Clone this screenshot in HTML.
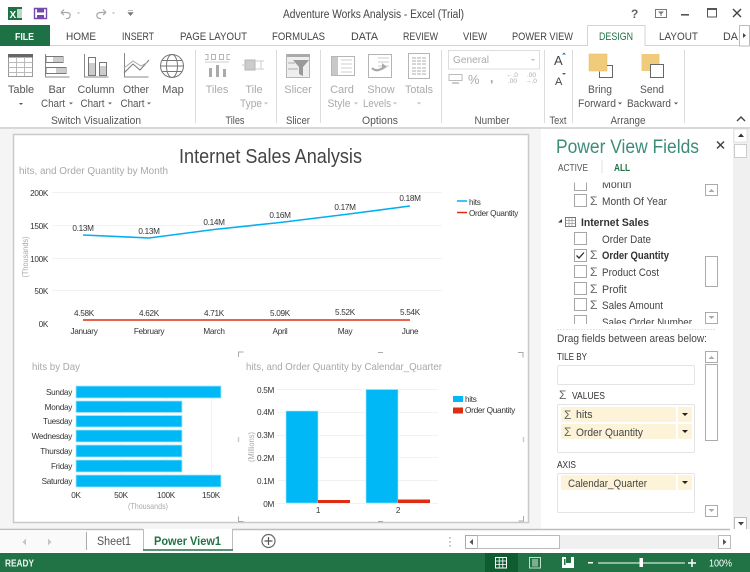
<!DOCTYPE html>
<html><head><meta charset="utf-8"><style>
html,body{margin:0;padding:0;background:#fff;width:750px;height:572px;overflow:hidden}
svg{display:block;filter:blur(.25px)}
text{font-family:"Liberation Sans",sans-serif;font-size:11px;fill:#444}
.r text{font-size:11px;fill:#555;text-anchor:middle}
.d text{font-size:11px;fill:#aaa;text-anchor:middle}
.tab text{font-size:11px;fill:#444}
.c text{font-size:8.2px;fill:#333;letter-spacing:-.3px}
.m{text-anchor:middle}
.e{text-anchor:end}
.f text{font-size:10.600px;fill:#444}
.f text.s{font-size:12px;fill:#666}
.f text.h{font-size:10.200px;fill:#333}
.g{fill:none;stroke:#f2f2f2;stroke-width:1}
.i{fill:none;stroke:#777;stroke-width:1}
.id{fill:none;stroke:#b5b5b5;stroke-width:1}
.sb{fill:#fff;stroke:#ababab}
.cb{fill:#fff;stroke:#a6a6a6}
</style></head><body>
<svg width="750" height="572" viewBox="0 0 750 572" xmlns="http://www.w3.org/2000/svg">
<defs><clipPath id="fl"><rect x="550" y="182.500" width="150" height="141.500"/></clipPath></defs>
<rect width="750" height="572" fill="#fff"/>

<!-- title bar -->
<rect x="8" y="7" width="14" height="13" fill="#1e7145"/><rect x="17" y="9" width="5" height="9" fill="#bcd8c6"/>
<text x="9.500" y="18" style="font-size:10px;font-weight:bold;fill:#fff">X</text>
<path d="M34.500 8.500H46.500V18.500H34.500Z" fill="#fff" stroke="#7449ae" stroke-width="1.400"/><rect x="37" y="9" width="7" height="3.500" fill="#7449ae"/><rect x="37" y="15" width="7" height="3.500" fill="#7449ae"/>
<path d="M61 12.500L64 9.500M61 12.500L64 15M61 12.500H67Q71 13 70 16.500Q69 19 66 18.500" fill="none" stroke="#a8a8a8" stroke-width="1.200"/>
<path d="M77 12.500h3l-1.500 1.500z" fill="#aaa"/>
<path d="M106 12.500L103 9.500M106 12.500L103 15M106 12.500H100Q96 13 97 16.500Q98 19 101 18.500" fill="none" stroke="#a8a8a8" stroke-width="1.200"/>
<path d="M112 12.500h3l-1.500 1.500z" fill="#aaa"/>
<path d="M128 10.500h5M128 12.500h5l-2.500 3z" fill="#777" stroke="#777" stroke-width=".6"/>
<text x="283" y="18" textLength="181" lengthAdjust="spacingAndGlyphs" style="font-size:11.500px;fill:#444">Adventure Works Analysis - Excel (Trial)</text>
<text x="631" y="18" style="font-size:12px;font-weight:bold;fill:#666">?</text>
<rect x="655.500" y="9.500" width="11" height="8" fill="none" stroke="#777"/><path d="M658 11.500h6l-3 3z" fill="#777"/><path d="M661 13v3" stroke="#777"/>
<rect x="681" y="14" width="8" height="1.600" fill="#555"/>
<rect x="707.500" y="8.500" width="9" height="8.500" fill="none" stroke="#555"/><rect x="707" y="8" width="10" height="2" fill="#555"/>
<path d="M733 9l8 8M741 9l-8 8" stroke="#444" stroke-width="1.400"/>

<!-- tabs -->
<rect x="0" y="25" width="50" height="21" fill="#1e7145"/>
<text x="15" y="40" textLength="19" lengthAdjust="spacingAndGlyphs" style="font-size:10.500px;font-weight:bold;fill:#fff">FILE</text>
<g class="tab">
<text x="66" y="40" textLength="30" lengthAdjust="spacingAndGlyphs">HOME</text>
<text x="122" y="40" textLength="32" lengthAdjust="spacingAndGlyphs">INSERT</text>
<text x="180" y="40" textLength="67" lengthAdjust="spacingAndGlyphs">PAGE LAYOUT</text>
<text x="272" y="40" textLength="53" lengthAdjust="spacingAndGlyphs">FORMULAS</text>
<text x="351" y="40" textLength="27" lengthAdjust="spacingAndGlyphs">DATA</text>
<text x="403" y="40" textLength="35" lengthAdjust="spacingAndGlyphs">REVIEW</text>
<text x="463" y="40" textLength="24" lengthAdjust="spacingAndGlyphs">VIEW</text>
<text x="512" y="40" textLength="61" lengthAdjust="spacingAndGlyphs">POWER VIEW</text>
<text x="659" y="40" textLength="39" lengthAdjust="spacingAndGlyphs">LAYOUT</text>
<text x="723" y="40" textLength="15" lengthAdjust="spacingAndGlyphs">DA</text>
</g>
<path d="M50 45.500H587.500V25.500H645V45.500H739" fill="none" stroke="#d4d4d4"/>
<text x="599" y="40" textLength="34" lengthAdjust="spacingAndGlyphs" style="font-size:11px;fill:#217346">DESIGN</text>
<rect x="739.500" y="25.500" width="10" height="20.500" fill="#fff" stroke="#bbb"/><path d="M743 33l3 2.500-3 2.500z" fill="#444"/>

<!-- ribbon icons enabled -->
<g class="i">
<rect x="8.500" y="54.500" width="24" height="22" stroke="#999"/><rect x="8" y="54" width="25" height="3.500" fill="#666" stroke="none"/>
<path d="M8.500 62.500h24M8.500 67.500h24M8.500 72.500h24M16.500 58v18M24.500 58v18" stroke="#bbb"/>
<path d="M45.500 54v23h24" stroke="#888"/>
<rect x="46" y="56.500" width="17" height="6" fill="#fff"/><rect x="53" y="57" width="10" height="5" fill="#ccc" stroke="none"/>
<rect x="46" y="67.500" width="20" height="6"/><rect x="56" y="68" width="10" height="5" fill="#ccc" stroke="none"/>
<path d="M84.500 54v23h24" stroke="#888"/>
<rect x="88.500" y="57.500" width="7" height="18"/><rect x="89" y="63" width="6" height="12" fill="#ccc" stroke="none"/>
<rect x="99.500" y="62.500" width="7" height="13"/><rect x="100" y="66" width="6" height="9" fill="#ccc" stroke="none"/>
<path d="M124.500 53v24h24" stroke="#888"/>
<path d="M124 73l9-9 7 6 9-10" stroke="#777"/><path d="M124 68l9-7 8 5 7-4" stroke="#aaa"/>
<circle cx="172" cy="66" r="11.500"/><ellipse cx="172" cy="66" rx="5.500" ry="11.500"/><path d="M160.500 66h23M162 60.500h20M162 71.500h20"/>
</g>

<g class="r">
<text x="21" y="93">Table</text><path d="M19 103h4l-2 2z" fill="#555"/>
<text x="57" y="93">Bar</text><text x="53" y="107" textLength="24" lengthAdjust="spacingAndGlyphs">Chart</text><path d="M69 102.500h4l-2 2z" fill="#666"/>
<text x="96" y="93" textLength="37" lengthAdjust="spacingAndGlyphs">Column</text><text x="92.500" y="107" textLength="24" lengthAdjust="spacingAndGlyphs">Chart</text><path d="M108 102.500h4l-2 2z" fill="#666"/>
<text x="136" y="93" textLength="26" lengthAdjust="spacingAndGlyphs">Other</text><text x="132.500" y="107" textLength="24" lengthAdjust="spacingAndGlyphs">Chart</text><path d="M147 102.500h4l-2 2z" fill="#666"/>
<text x="173" y="93">Map</text>
<text x="600" y="93" textLength="24" lengthAdjust="spacingAndGlyphs">Bring</text><text x="597" y="107" textLength="38" lengthAdjust="spacingAndGlyphs">Forward</text><path d="M618 102.500h4l-2 2z" fill="#555"/>
<text x="652" y="93" textLength="24" lengthAdjust="spacingAndGlyphs">Send</text><text x="649" y="107" textLength="44" lengthAdjust="spacingAndGlyphs">Backward</text><path d="M674 102.500h4l-2 2z" fill="#555"/>
<text x="96" y="124" textLength="90" lengthAdjust="spacingAndGlyphs">Switch Visualization</text>
<text x="235" y="124" textLength="19" lengthAdjust="spacingAndGlyphs">Tiles</text>
<text x="298" y="124" textLength="24" lengthAdjust="spacingAndGlyphs">Slicer</text>
<text x="380" y="124" textLength="36" lengthAdjust="spacingAndGlyphs">Options</text>
<text x="492" y="124" textLength="35" lengthAdjust="spacingAndGlyphs">Number</text>
<text x="558" y="124" textLength="17" lengthAdjust="spacingAndGlyphs">Text</text>
<text x="628" y="124" textLength="35" lengthAdjust="spacingAndGlyphs">Arrange</text>
</g>
<g class="d">
<text x="217" y="93">Tiles</text>
<text x="254" y="93">Tile</text><text x="251" y="107" textLength="22" lengthAdjust="spacingAndGlyphs">Type</text><path d="M264 102.500h4l-2 2z" fill="#bbb"/>
<text x="298" y="93">Slicer</text>
<text x="342" y="93">Card</text><text x="339" y="107" textLength="23" lengthAdjust="spacingAndGlyphs">Style</text><path d="M354 102.500h4l-2 2z" fill="#bbb"/>
<text x="381" y="93">Show</text><text x="377" y="107" textLength="28" lengthAdjust="spacingAndGlyphs">Levels</text><path d="M393 102.500h4l-2 2z" fill="#bbb"/>
<text x="419" y="93" textLength="28" lengthAdjust="spacingAndGlyphs">Totals</text><path d="M417 102.500h4l-2 2z" fill="#bbb"/>
</g>

<!-- disabled icons -->
<g class="id">
<path d="M205 54.500h3v5h-3M211.500 54.500h4v5h-4zM219.500 54.500h4v5h-4zM230 54.500h-3v5h3"/>
<path d="M205 62h24" stroke="#ccc"/>
<rect x="209" y="68" width="3" height="9" fill="#aaa" stroke="none"/><rect x="216" y="65" width="3" height="12" fill="#aaa" stroke="none"/><rect x="223" y="69" width="3" height="8" fill="#aaa" stroke="none"/>
<rect x="245" y="60" width="10" height="10" fill="#ccc"/><path d="M242 65h3M255 61h9M255 69h9M261 61v8" stroke="#ccc"/>
<rect x="286.500" y="54.500" width="23" height="23" fill="#eee"/><rect x="287" y="54" width="23" height="3" fill="#aaa" stroke="none"/>
<path d="M293 60h16l-6 7v9l-4-2v-7z" fill="#999" stroke="none"/><path d="M288 63h7M288 69h10" stroke="#ccc" stroke-width="2"/>
<rect x="331.500" y="56.500" width="23" height="19"/><rect x="332" y="57" width="6" height="18" fill="#c8c8c8" stroke="none"/><path d="M341 60h11M341 64h11M341 68h11M341 72h11" stroke="#ccc"/>
<rect x="368.500" y="54.500" width="23" height="23"/><path d="M378 58h11M378 62h11M378 66h11" stroke="#ccc"/><path d="M372 68q5 5 12-1" stroke="#aaa" stroke-width="2.200"/><path d="M382 63l5 4-5 3z" fill="#aaa" stroke="none"/>
<rect x="408.500" y="53.500" width="21" height="25"/><path d="M412 58h14M412 61h14M412 64h14M412 68h14M412 71h14M412 74h14" stroke="#c8c8c8" stroke-width="1.500"/><path d="M416.500 57v18M421.500 57v18" stroke="#fff"/>
<rect x="448.500" y="50.500" width="91" height="18.500" stroke="#ddd"/>
<path d="M449 74.500h13v6h-13z" stroke="#bbb"/><path d="M452 83h7" stroke="#ccc" stroke-width="2"/>
</g>
<text x="453" y="63" textLength="36" lengthAdjust="spacingAndGlyphs" style="fill:#aaa;font-size:10.500px">General</text>
<path d="M531 59h4l-2 2z" fill="#bbb"/>
<text x="468" y="84" style="font-size:13px;fill:#aaa">%</text>
<text x="490" y="82" style="font-size:12px;font-weight:bold;fill:#999">,</text>
<text x="506" y="77" style="font-size:6.500px;fill:#aaa">←.0</text><text x="508" y="83" style="font-size:6.500px;fill:#aaa">.00</text>
<text x="527" y="77" style="font-size:6.500px;fill:#aaa">.00</text><text x="525" y="83" style="font-size:6.500px;fill:#aaa">→.0</text>
<text x="554" y="65" style="font-size:13px;fill:#444">A</text><path d="M562 54.500h4l-2-2z" fill="#1a6fb5"/>
<text x="555" y="85" style="font-size:11px;fill:#444">A</text><path d="M562 73h4l-2 2z" fill="#1a6fb5"/>

<rect x="589" y="54" width="18" height="17" fill="#f1cb7c" stroke="#e6b95e" stroke-width=".5"/>
<path d="M607 65.500h5.500v12h-13v-6" fill="none" stroke="#666"/>
<rect x="641.500" y="54" width="18" height="17" fill="#f1cb7c"/>
<rect x="650.500" y="64.500" width="13" height="13" fill="#fff" stroke="#666"/>

<g stroke="#dcdcdc"><path d="M195.500 50v73M276.500 50v73M320.500 50v73M441.500 50v73M544.500 50v73M572.500 50v73M684.500 50v73"/></g>
<path d="M737 121l4-4 4 4" fill="none" stroke="#444" stroke-width="1.400"/>

<!-- workspace -->
<rect x="0" y="127" width="750" height="403" fill="#f5f5f5"/>
<rect x="0" y="127" width="750" height="2" fill="#d8d8d8"/>
<rect x="13.500" y="134.500" width="515" height="388" fill="#fff" stroke="#c9c9c9" stroke-width="1.500"/>

<text x="179" y="163" textLength="183" lengthAdjust="spacingAndGlyphs" style="font-size:20px;fill:#444">Internet Sales Analysis</text>
<text x="19" y="174" textLength="149" lengthAdjust="spacingAndGlyphs" style="font-size:10.500px;fill:#a8a8a8">hits, and Order Quantity by Month</text>

<!-- line chart -->
<path class="g" d="M52 192.500H442M52 225.500H442M52 258.500H442M52 290.500H442"/>
<polyline points="83,235 149,238 214,229.500 280,222.500 345,214.500 410,206" fill="none" stroke="#00b0f0" stroke-width="1.600"/>
<path d="M83 320H410" stroke="#dd2e12" stroke-width="1.600"/>
<g class="c">
<text class="e" x="48" y="196">200K</text><text class="e" x="48" y="229">150K</text><text class="e" x="48" y="262">100K</text><text class="e" x="48" y="294">50K</text><text class="e" x="48" y="327">0K</text>
<text class="m" x="83" y="231">0.13M</text><text class="m" x="149" y="234">0.13M</text><text class="m" x="214" y="225">0.14M</text><text class="m" x="280" y="218">0.16M</text><text class="m" x="345" y="210">0.17M</text><text class="m" x="410" y="201">0.18M</text>
<text class="m" x="84" y="316">4.58K</text><text class="m" x="149" y="316">4.62K</text><text class="m" x="214" y="316">4.71K</text><text class="m" x="280" y="316">5.09K</text><text class="m" x="345" y="315">5.52K</text><text class="m" x="410" y="315">5.54K</text>
<text class="m" x="84" y="334">January</text><text class="m" x="149" y="334">February</text><text class="m" x="214" y="334">March</text><text class="m" x="280" y="334">April</text><text class="m" x="345" y="334">May</text><text class="m" x="410" y="334">June</text>
<text x="469" y="205">hits</text><text x="469" y="216" textLength="49" lengthAdjust="spacingAndGlyphs">Order Quantity</text>
</g>
<path d="M457 201h10" stroke="#00b0f0" stroke-width="1.500"/><path d="M457 212.500h10" stroke="#dd2e12" stroke-width="1.500"/>
<text transform="translate(28,257) rotate(-90)" text-anchor="middle" textLength="41" lengthAdjust="spacingAndGlyphs" style="font-size:8.500px;fill:#aaa">(Thousands)</text>

<!-- bar chart -->
<text x="32" y="370" textLength="48" lengthAdjust="spacingAndGlyphs" style="font-size:10.500px;fill:#a8a8a8">hits by Day</text>
<path class="g" d="M121.500 386V488M166.500 386V488M211.500 386V488"/>
<g fill="#00b8f5" stroke="#a8e6fb" stroke-width=".8">
<rect x="76" y="386" width="145" height="12"/><rect x="76" y="401" width="106" height="11.500"/><rect x="76" y="415.500" width="106" height="11.500"/><rect x="76" y="430" width="106" height="12"/><rect x="76" y="445" width="106" height="12"/><rect x="76" y="460" width="106" height="12"/><rect x="76" y="475" width="145" height="12"/>
</g>
<g class="c">
<text class="e" x="72" y="395">Sunday</text><text class="e" x="72" y="410">Monday</text><text class="e" x="72" y="424">Tuesday</text><text class="e" x="72" y="439">Wednesday</text><text class="e" x="72" y="454">Thursday</text><text class="e" x="72" y="469">Friday</text><text class="e" x="72" y="484">Saturday</text>
<text class="m" x="76" y="498">0K</text><text class="m" x="121" y="498">50K</text><text class="m" x="166" y="498">100K</text><text class="m" x="211" y="498">150K</text>
</g>
<text x="148" y="509" text-anchor="middle" textLength="40" lengthAdjust="spacingAndGlyphs" style="font-size:8.500px;fill:#aaa">(Thousands)</text>

<!-- column chart -->
<path d="M238.500 357v-5h5M518 352.500h5v5M523.500 516v5h-5M243.500 521.500h-5v-5M378 352.500h5M378 521.500h5" fill="none" stroke="#aaa"/>
<path d="M238.500 437v5M523.500 437v5" stroke="#ccc" stroke-width="1.500"/>
<text x="246" y="370" textLength="196" lengthAdjust="spacingAndGlyphs" style="font-size:10.500px;fill:#a8a8a8">hits, and Order Quantity by Calendar_Quarter</text>
<path class="g" d="M277 389.500H438M277 412.500H438M277 435.500H438M277 457.500H438M277 480.500H438M277 503.500H438"/>
<g fill="#00b8f5" stroke="#a8e6fb" stroke-width=".6"><rect x="286" y="411" width="32" height="92"/><rect x="366" y="389.500" width="32" height="113.500"/></g>
<rect x="318" y="500" width="32" height="3" fill="#dd2e12"/><rect x="398" y="499.500" width="32" height="3.500" fill="#dd2e12"/>
<g class="c">
<text class="e" x="274" y="393">0.5M</text><text class="e" x="274" y="415">0.4M</text><text class="e" x="274" y="438">0.3M</text><text class="e" x="274" y="461">0.2M</text><text class="e" x="274" y="484">0.1M</text><text class="e" x="274" y="507">0M</text>
<text class="m" x="318" y="513">1</text><text class="m" x="398" y="513">2</text>
<text x="465" y="402">hits</text><text x="465" y="413" textLength="50" lengthAdjust="spacingAndGlyphs">Order Quantity</text>
</g>
<rect x="453" y="396" width="10" height="6" fill="#00b8f5"/><rect x="453" y="407.500" width="10" height="6" fill="#dd2e12"/>
<text transform="translate(254,447) rotate(-90)" text-anchor="middle" textLength="30" lengthAdjust="spacingAndGlyphs" style="font-size:8.500px;fill:#aaa">(Millions)</text>

<!-- field panel -->
<rect x="541" y="129" width="192" height="401" fill="#fff"/>
<text x="556" y="153" textLength="143" lengthAdjust="spacingAndGlyphs" style="font-size:19px;fill:#3d8c78">Power View Fields</text>
<path d="M717 141.500l7 7M724 141.500l-7 7" stroke="#444" stroke-width="1.500"/>
<text x="558" y="171" textLength="30" lengthAdjust="spacingAndGlyphs" style="font-size:10px;fill:#555">ACTIVE</text>
<path d="M602 160v13" stroke="#e2e2e2"/>
<text x="614" y="171" textLength="16" lengthAdjust="spacingAndGlyphs" style="font-size:10px;font-weight:bold;fill:#217346">ALL</text>

<g clip-path="url(#fl)">
<g class="cb">
<rect x="574.500" y="178.500" width="12" height="12"/><rect x="574.500" y="194.500" width="12" height="12"/><rect x="574.500" y="232.500" width="12" height="12"/><rect x="574.500" y="249.500" width="12" height="12"/><rect x="574.500" y="265.500" width="12" height="12"/><rect x="574.500" y="282.500" width="12" height="12"/><rect x="574.500" y="298.500" width="12" height="12"/><rect x="574.500" y="315.500" width="12" height="12"/>
</g>
<path d="M576.500 255.500l2.500 2.500 5-5.500" fill="none" stroke="#333" stroke-width="1.300"/>
<g class="f">
<text x="602" y="188">Month</text>
<text class="s" x="590" y="205">Σ</text><text x="602" y="205" textLength="65" lengthAdjust="spacingAndGlyphs">Month Of Year</text>
<text x="602" y="243" textLength="49" lengthAdjust="spacingAndGlyphs">Order Date</text>
<text class="s" x="590" y="259">Σ</text><text x="602" y="259" textLength="67" lengthAdjust="spacingAndGlyphs" style="font-weight:bold;fill:#333">Order Quantity</text>
<text class="s" x="590" y="276">Σ</text><text x="602" y="276" textLength="57" lengthAdjust="spacingAndGlyphs">Product Cost</text>
<text class="s" x="590" y="293">Σ</text><text x="602" y="293">Profit</text>
<text class="s" x="590" y="309">Σ</text><text x="602" y="309" textLength="61" lengthAdjust="spacingAndGlyphs">Sales Amount</text>
<text x="602" y="326" textLength="90" lengthAdjust="spacingAndGlyphs">Sales Order Number</text>
</g>
</g>
<path d="M558 222.500l4-3.500v3.500z" fill="#333"/>
<rect x="565.500" y="217.500" width="10" height="9" fill="#fff" stroke="#777"/><path d="M565.500 220.500h10M565.500 223.500h10M569 218v9M572 218v9" stroke="#999" stroke-width=".7"/>
<text x="581" y="226" textLength="68" lengthAdjust="spacingAndGlyphs" style="font-size:11px;font-weight:bold;fill:#333">Internet Sales</text>

<g class="sb"><rect x="705.500" y="184.500" width="12" height="11"/><rect x="705.500" y="256.500" width="12" height="30"/><rect x="705.500" y="312.500" width="12" height="11"/></g>
<path d="M708.500 192h6l-3-3z" fill="#aaa"/><path d="M708.500 316h6l-3 3z" fill="#aaa"/>

<path d="M557 329.500H716" stroke="#ddd" stroke-dasharray="1.500 1.500"/>
<g class="f">
<text x="557" y="342" textLength="150" lengthAdjust="spacingAndGlyphs">Drag fields between areas below:</text>
<text class="h" x="557" y="360" textLength="30" lengthAdjust="spacingAndGlyphs">TILE BY</text>
<text class="s" x="559" y="399">Σ</text><text class="h" x="572" y="399" textLength="33" lengthAdjust="spacingAndGlyphs">VALUES</text>
<text class="h" x="557" y="468" textLength="19" lengthAdjust="spacingAndGlyphs">AXIS</text>
</g>
<g fill="#fff" stroke="#e3e3e3"><rect x="557.500" y="365.500" width="137" height="19" rx="1.500"/><rect x="557.500" y="404.500" width="137" height="48" rx="1.500"/><rect x="557.500" y="473.500" width="137" height="39" rx="1.500"/></g>
<g fill="#fdf3d8">
<rect x="561" y="407" width="115" height="15"/><rect x="678" y="407" width="14" height="15"/>
<rect x="561" y="424" width="115" height="15"/><rect x="678" y="424" width="14" height="15"/>
<rect x="561" y="475" width="115" height="15"/><rect x="678" y="475" width="14" height="15"/>
</g>
<path d="M682 413h6l-3 3zM682 430h6l-3 3zM682 481h6l-3 3z" fill="#222"/>
<g class="f">
<text class="s" x="564" y="419">Σ</text><text x="576" y="418">hits</text>
<text class="s" x="564" y="436">Σ</text><text x="576" y="436" textLength="67" lengthAdjust="spacingAndGlyphs">Order Quantity</text>
<text x="568" y="487" textLength="79" lengthAdjust="spacingAndGlyphs">Calendar_Quarter</text>
</g>
<g class="sb"><rect x="705.500" y="351.500" width="12" height="11"/><rect x="705.500" y="364.500" width="12" height="76"/><rect x="705.500" y="505.500" width="12" height="11"/></g>
<path d="M708.500 359h6l-3-3z" fill="#aaa"/><path d="M708.500 509h6l-3 3z" fill="#aaa"/>

<!-- main v scrollbar -->
<rect x="733" y="129" width="17" height="401" fill="#f0f0f0"/>
<rect x="734" y="129" width="13" height="13" fill="#fff" stroke="#ccc" stroke-width=".5"/><path d="M738 137h6l-3-3.500z" fill="#333"/>
<rect x="734.500" y="144.500" width="12" height="13" fill="#fff" stroke="#ccc"/>
<rect x="734.500" y="517.500" width="12" height="12" fill="#fff" stroke="#bbb"/><path d="M738 522h6l-3 3.500z" fill="#444"/>

<!-- sheet tabs -->
<rect x="0" y="529" width="750" height="24" fill="#fff"/>
<path d="M0 529.500H143M232 529.500H730" stroke="#bdbdbd" stroke-width="1.500"/>
<rect x="0" y="530" width="86" height="22" fill="#fafafa"/>
<path d="M26 538.500v7l-3.500-3.500z" fill="#c5c5c5"/><path d="M48 538.500v7l3.500-3.500z" fill="#c5c5c5"/>
<path d="M86.500 532v18" stroke="#aaa"/>
<text x="97" y="545" textLength="34" lengthAdjust="spacingAndGlyphs" style="font-size:11.500px;fill:#555">Sheet1</text>
<path d="M143.500 529v21M232.500 529v21" stroke="#bdbdbd"/>
<path d="M143 550h90" stroke="#217346" stroke-width="1.500"/>
<text x="154" y="545" textLength="67" lengthAdjust="spacingAndGlyphs" style="font-size:11.500px;font-weight:bold;fill:#217346">Power View1</text>
<circle cx="268.500" cy="541" r="6.500" fill="#fff" stroke="#666" stroke-width="1.200"/><path d="M264.500 541h8M268.500 537v8" stroke="#555" stroke-width="1.200"/>
<path d="M450 537v1.500M450 541v1.500M450 545v1.500" stroke="#999" stroke-width="1.200"/>
<rect x="465.500" y="535.500" width="12" height="13" fill="#fff" stroke="#aaa"/><path d="M473 539v6l-3.500-3z" fill="#555"/>
<rect x="477.500" y="535.500" width="82" height="13" fill="#fff" stroke="#bbb"/>
<rect x="560" y="535" width="158" height="14" fill="#f0f0f0"/>
<rect x="718.500" y="535.500" width="12" height="13" fill="#fff" stroke="#bbb"/><path d="M723 539v6l3.500-3z" fill="#555"/>

<!-- status -->
<rect x="0" y="553" width="750" height="19" fill="#217346"/>
<text x="5" y="566.500" textLength="29" lengthAdjust="spacingAndGlyphs" style="font-size:10px;font-weight:bold;fill:#f0f6f2">READY</text>
<rect x="485" y="553" width="33" height="19" fill="#0f5c31"/>
<rect x="495.500" y="557.500" width="11" height="10.500" fill="none" stroke="#fff"/><path d="M499.200 557.500v10.500M502.800 557.500v10.500M495.500 561h11M495.500 564.500h11" stroke="#fff" stroke-width=".8"/>
<rect x="529.500" y="557.500" width="11" height="10.500" fill="none" stroke="#c6dccd"/><rect x="532" y="559" width="6" height="7.500" fill="#7fae8f"/>
<path d="M562 557h12v11h-12z" fill="#fff"/><path d="M566 557v6h5V557z" fill="#217346"/><rect x="564" y="559" width="1.500" height="6" fill="#217346"/>
<rect x="588" y="562" width="5" height="1.500" fill="#fff"/>
<rect x="598" y="562.500" width="87" height="1" fill="#fff"/>
<rect x="639.500" y="558" width="3.500" height="9" fill="#fff"/>
<path d="M688 563h8M692 559v8" stroke="#fff" stroke-width="1.500"/>
<text x="709" y="566.500" textLength="23" lengthAdjust="spacingAndGlyphs" style="font-size:10px;fill:#fff">100%</text>
</svg>
</body></html>
